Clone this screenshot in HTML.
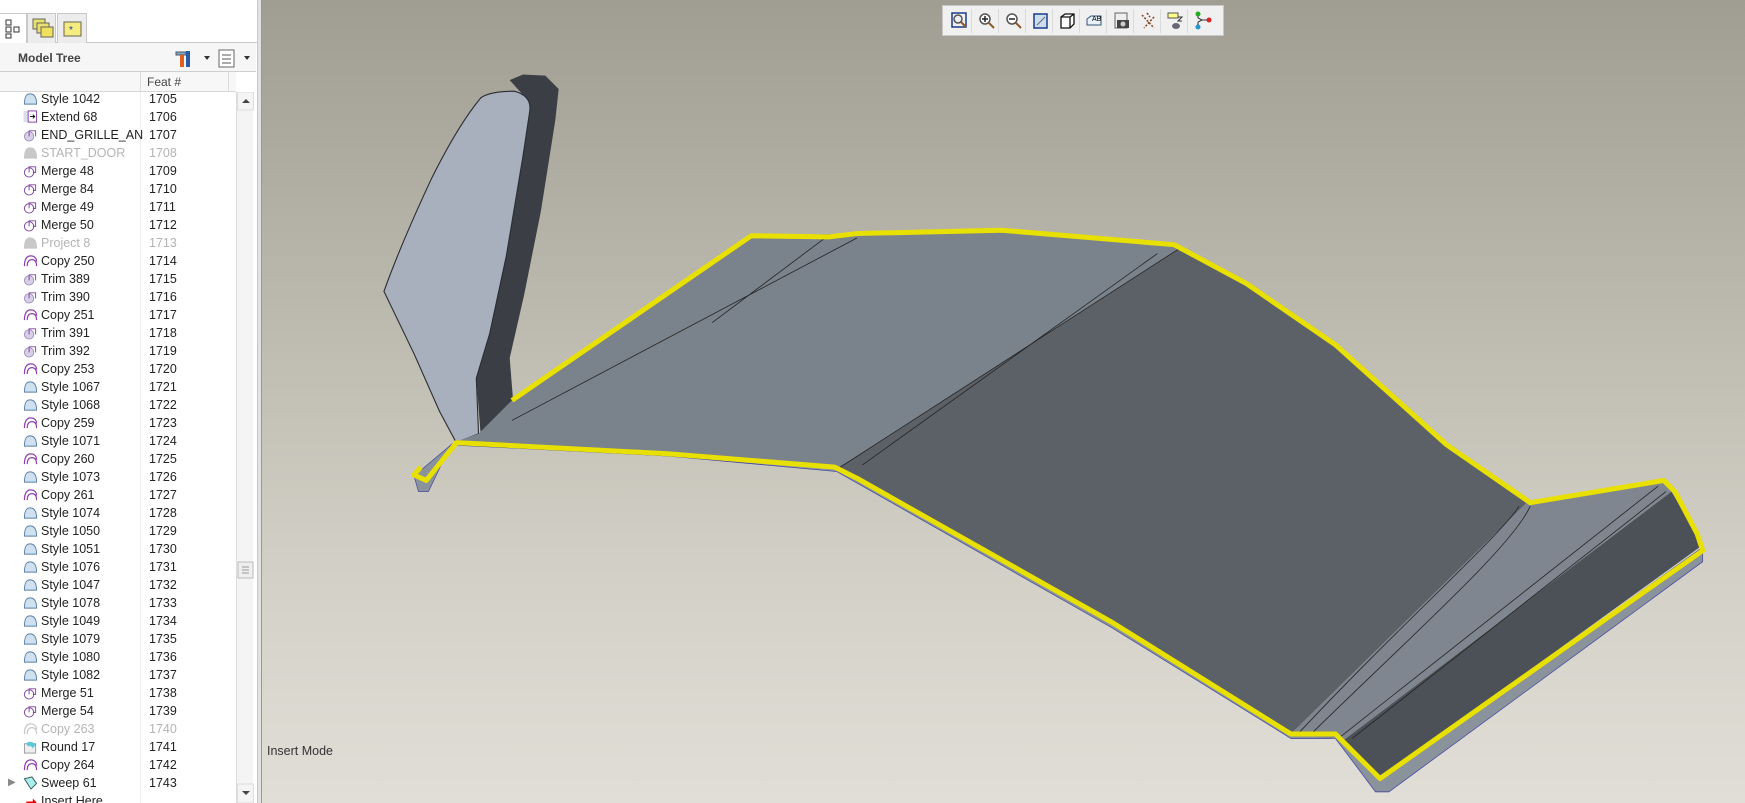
<!DOCTYPE html>
<html><head><meta charset="utf-8"><style>
*{margin:0;padding:0;box-sizing:border-box}
html{overflow:hidden;width:1745px;height:803px}
body{width:1745px;height:803px;overflow:hidden;position:relative;font-family:"Liberation Sans",sans-serif;background:linear-gradient(#a09e92,#b9b7ab 35%,#d2d0c6 70%,#e0ded6)}
#panel{position:absolute;left:0;top:0;width:258px;height:803px;background:#fff;border-right:1px solid #c8c8c8;overflow:hidden}
#split{position:absolute;left:258px;top:0;width:4px;height:803px;background:#e2e2e2;border-right:1px solid #999}
.tabs{position:absolute;left:0;top:0;width:258px;height:43px;background:#fff;border-bottom:1px solid #c9c9c9}
.tab{position:absolute;top:13px;height:30px;border:1px solid #c9c9c9;border-bottom:none;background:#ececec}
.hdr{position:absolute;left:0;top:43px;width:256px;height:29px;background:#f6f6f6;border-bottom:1px solid #cfcfcf;font-size:12px;font-weight:bold;color:#444}
.col{position:absolute;left:0;top:72px;width:236px;height:20px;background:#f7f7f7;border-bottom:1px solid #d6d6d6;font-size:12px;color:#444}
.row{position:absolute;left:0;height:18px;width:236px;font-size:12.5px;color:#222;line-height:18px;white-space:nowrap}
.row .n{position:absolute;left:41px}
.row .f{position:absolute;left:149px}
.row.g{color:#b4b4b4}
.ic{position:absolute;left:23px;top:2px;width:15px;height:14px}
.sb{position:absolute;left:236px;top:92px;width:17px;height:711px;background:#f4f4f4;border-left:1px solid #ddd}
#tb{position:absolute;left:942px;top:5px;width:282px;height:31px;background:#f0f0f0;border:1px solid #c8c8c8}
#tb div{position:absolute;top:3px;width:25px;height:24px;border-right:1px solid #dadada}
</style></head><body>
<svg style="position:absolute;left:0;top:0" width="1745" height="803" viewBox="0 0 1568 722" preserveAspectRatio="none">
<!-- fin -->
<path d="M476,92 L458,72 L470,67 L490,68 L502,80 L499,108 L486,190 L471,265 L458,322 L462,372 L432,392 L428,340 L440,300 L455,230 L470,140 Z" fill="#3b3f45"/>
<path d="M345,262 Q360,220 388,160 Q412,112 432,88 Q440,82 462,82 Q478,86 476,100 L470,140 L455,230 L440,300 L428,340 L430,390 L410,398 L395,370 L372,318 Z" fill="#a7b0bc" stroke="#2a2d33" stroke-width="1"/>
<!-- underside lip -->
<path d="M405,400 L600,410 L752,424 L1000,565 L1160,664 L1200,664 L1236,712 L1248,712 L1530,505 L1530,492 L1240,700 L1200,660 L1160,660 L1000,560 L760,420 L600,405 L410,396 L372,428 L376,442 L385,442 Z" fill="#8a929c" stroke="#3b3fa0" stroke-width="0.6"/>
<!-- main left face -->
<path d="M430,390 L460,360 L675,212 L770,210 L900,207 L1062,222 L755,420 L600,406 L410,397 Z" fill="#7a828c"/>
<!-- dark right face -->
<path d="M1062,222 L1120,255 L1200,310 L1300,400 L1372,452 L1160,660 L1000,560 L755,420 Z" fill="#5c6168"/>
<!-- flange top -->
<path d="M1372,452 L1495,432 L1502,442 L1208,665 L1160,660 Z" fill="#7f8690"/>
<!-- side face -->
<path d="M1502,442 L1530,490 L1240,700 L1208,665 Z" fill="#4c5057"/>
<g stroke="#222" stroke-width="0.7" fill="none">
<path d="M1062,222 L755,420"/><path d="M1040,228 L775,418"/>
<path d="M770,214 L460,378"/><path d="M740,215 L640,290"/>
<path d="M1365,455 C1350,480 1260,560 1168,658"/><path d="M1375,455 C1360,490 1270,570 1178,660"/>
<path d="M1490,437 L1205,662"/><path d="M1497,442 L1215,664"/>
</g>
<!-- yellow edge -->
<path d="M460,360 L675,212 L745,213 L770,210 L900,207 L1055,220 L1120,255 L1200,310 L1300,400 L1375,452 L1495,432 L1505,442 L1525,480 L1530,495 L1240,700 L1200,660 L1160,660 L1000,560 L770,430 L750,420 L600,408 L410,398 L383,432 L372,427 L378,420" fill="none" stroke="#e8e000" stroke-width="4.5" stroke-linejoin="round"/>
</svg>

<div id="tb">
<div style="left:4px"><svg width="25" height="24"><rect x="5" y="4" width="14" height="14" fill="none" stroke="#1a3a8a" stroke-width="1.5"/><circle cx="11" cy="10" r="4" fill="none" stroke="#555" stroke-width="1.5"/><path d="M14,13 L19,18" stroke="#8a5a2a" stroke-width="2"/></svg></div>
<div style="left:31px"><svg width="25" height="24"><circle cx="11" cy="10" r="5" fill="#fff" stroke="#555" stroke-width="1.5"/><path d="M8,10h6M11,7v6" stroke="#222" stroke-width="1.5"/><path d="M15,14 L20,19" stroke="#8a5a2a" stroke-width="2"/></svg></div>
<div style="left:58px"><svg width="25" height="24"><circle cx="11" cy="10" r="5" fill="#fff" stroke="#555" stroke-width="1.5"/><path d="M8,10h6" stroke="#222" stroke-width="1.5"/><path d="M15,14 L20,19" stroke="#8a5a2a" stroke-width="2"/></svg></div>
<div style="left:85px"><svg width="25" height="24"><rect x="6" y="5" width="13" height="14" fill="#cde" stroke="#1a3a8a" stroke-width="1.5"/><path d="M9,16 L17,8" stroke="#666"/></svg></div>
<div style="left:112px"><svg width="25" height="24"><path d="M6,8 L10,5 L19,5 L19,15 L15,19 L6,19Z M6,8 L15,8 L15,19 M15,8 L19,5" fill="#fff" stroke="#111" stroke-width="1.3"/></svg></div>
<div style="left:139px"><svg width="25" height="24"><path d="M5,10 L9,7 L19,7 L19,16 L5,16Z" fill="#e8f0f8" stroke="#357" /><text x="10" y="12" font-size="7" font-family="Liberation Sans">AB</text></svg></div>
<div style="left:166px"><svg width="25" height="24"><rect x="6" y="4" width="12" height="15" fill="#eee" stroke="#666"/><rect x="8" y="11" width="12" height="8" fill="#444"/><circle cx="14" cy="15" r="2.5" fill="#ccc"/></svg></div>
<div style="left:193px"><svg width="25" height="24"><path d="M6,6 L18,19 M18,8 L8,19 M11,4 L14,8" stroke="#8a4a2a" stroke-width="1.6" stroke-dasharray="2 1.5"/></svg></div>
<div style="left:220px"><svg width="25" height="24"><rect x="5" y="4" width="10" height="5" fill="#ff8" stroke="#555"/><path d="M15,8 l4,0 l-4,4 l4,0" stroke="#333" fill="none"/><ellipse cx="13" cy="17" rx="4" ry="3" fill="#667"/></svg></div>
<div style="left:247px;border:none"><svg width="25" height="24"><circle cx="8" cy="5" r="2.5" fill="#2a2"/><circle cx="8" cy="18" r="2.5" fill="#29c"/><circle cx="19" cy="11" r="2.5" fill="#d22"/><path d="M8,7 L8,9 L12,11 L17,11 M12,11 L8,13 L8,16" stroke="#333" fill="none"/></svg></div>
</div>

<div style="position:absolute;left:267px;top:744px;font-size:12.5px;color:#333">Insert Mode</div>

<div id="panel">
<div class="tabs">
<div class="tab" style="left:0;width:27px;background:#fff;border-left:none"><svg width="26" height="28"><rect x="6" y="6" width="5" height="5" fill="none" stroke="#333"/><rect x="6" y="13" width="5" height="5" fill="none" stroke="#333"/><rect x="14" y="13" width="5" height="5" fill="none" stroke="#333"/><rect x="6" y="20" width="5" height="4" fill="none" stroke="#333"/></svg></div>
<div class="tab" style="left:27px;width:29px"><svg width="28" height="28"><rect x="5" y="5" width="12" height="10" fill="#e8e070" stroke="#665"/><rect x="9" y="9" width="12" height="10" fill="#e8e070" stroke="#665"/><rect x="13" y="13" width="12" height="10" fill="#f0e060" stroke="#665"/></svg></div>
<div class="tab" style="left:57px;width:30px"><svg width="28" height="28"><rect x="6" y="8" width="17" height="14" fill="#f5ec80" stroke="#665"/><text x="11" y="19" font-size="10" fill="#23a">*</text></svg></div>
</div>
<div class="hdr"><span style="position:absolute;left:18px;top:8px">Model Tree</span>
<svg style="position:absolute;left:174px;top:4px" width="80" height="22"><path d="M2,5 h10 v3 h-10z" fill="#8ab" stroke="#456"/><rect x="6" y="8" width="4" height="12" fill="#e06020"/><rect x="12" y="4" width="4" height="16" fill="#2a5aa8"/><path d="M30,9 l3,4 l3,-4z" fill="#333"/><rect x="45" y="3" width="15" height="17" fill="#fff" stroke="#666"/><path d="M48,8h9M48,12h9M48,16h9" stroke="#555"/><path d="M70,9 l3,4 l3,-4z" fill="#333"/></svg></div>
<div class="col"><span style="position:absolute;left:147px;top:3px">Feat #</span><span style="position:absolute;left:140px;top:0;height:20px;border-left:1px solid #ddd"></span><span style="position:absolute;left:228px;top:0;height:20px;border-left:1px solid #ddd"></span></div>
<div style="position:absolute;left:140px;top:92px;height:711px;border-left:1px solid #eee"></div>
<div id="rows"></div>
<div class="sb"><svg width="17" height="711"><path d="M5,11 l4,-4 l4,4z" fill="#444"/><rect x="0.5" y="0" width="16" height="18" fill="none" stroke="#ddd"/><rect x="1" y="470" width="15" height="16" fill="#eee" stroke="#bbb"/><path d="M5,475h7M5,478h7M5,481h7" stroke="#999"/><rect x="0.5" y="692" width="16" height="19" fill="none" stroke="#ddd"/><path d="M5,699 l4,4 l4,-4z" fill="#444"/></svg></div>
</div>
<div id="split"></div>
<script>
var d=[["Style 1042",1705,"s"],["Extend 68",1706,"e"],["END_GRILLE_AN",1707,"t"],["START_DOOR",1708,"s",1],["Merge 48",1709,"m"],["Merge 84",1710,"m"],["Merge 49",1711,"m"],["Merge 50",1712,"m"],["Project 8",1713,"s",1],["Copy 250",1714,"c"],["Trim 389",1715,"t"],["Trim 390",1716,"t"],["Copy 251",1717,"c"],["Trim 391",1718,"t"],["Trim 392",1719,"t"],["Copy 253",1720,"c"],["Style 1067",1721,"s"],["Style 1068",1722,"s"],["Copy 259",1723,"c"],["Style 1071",1724,"s"],["Copy 260",1725,"c"],["Style 1073",1726,"s"],["Copy 261",1727,"c"],["Style 1074",1728,"s"],["Style 1050",1729,"s"],["Style 1051",1730,"s"],["Style 1076",1731,"s"],["Style 1047",1732,"s"],["Style 1078",1733,"s"],["Style 1049",1734,"s"],["Style 1079",1735,"s"],["Style 1080",1736,"s"],["Style 1082",1737,"s"],["Merge 51",1738,"m"],["Merge 54",1739,"m"],["Copy 263",1740,"c",1],["Round 17",1741,"r"],["Copy 264",1742,"c"],["Sweep 61",1743,"w"],["Insert Here","","i"]];
var ic={s:'<path d="M1,13 C1,5 3,2 7,2 C11,2 14,5 14,13 Z" fill="#cfe0f0" stroke="#5a7fa8"/>',
e:'<rect x="0" y="1" width="6" height="12" fill="#dde"/><rect x="5" y="1" width="9" height="12" fill="#fff" stroke="#8040a0"/><path d="M7,7h5M10,5l2,2l-2,2" stroke="#000" fill="none"/>',
t:'<circle cx="6" cy="9" r="5" fill="#d8d0e8" stroke="#a090c0"/><path d="M6,9 L6,3 L13,3 L13,9" fill="none" stroke="#8040a0"/>',
m:'<circle cx="6" cy="9" r="5" fill="none" stroke="#8040a0"/><path d="M6,9 L6,3 L13,3 L13,9 L10,9" fill="none" stroke="#8040a0"/>',
c:'<path d="M1,13 C1,5 4,2 8,2 C11,2 14,4 14,8 M4,13 C4,8 6,6 9,6 C12,6 14,8 14,13" fill="none" stroke="#9040b0" stroke-width="1.3"/>',
r:'<rect x="1" y="4" width="12" height="10" fill="#eee" stroke="#999"/><path d="M3,4 C4,1 10,1 13,5 L10,9 C8,6 6,6 5,7Z" fill="#5cc8d8"/>',
w:'<path d="M1,3 L9,1 L14,8 L8,14 Z" fill="#aee" stroke="#355"/>',
i:'<path d="M3,8 h7 v-3 l4,4 l-4,4 v-3 h-7z" fill="#e00"/>'};
var h="";d.forEach(function(r,i){var y=90+18*i;var svg=ic[r[2]];if(r[3])svg=svg.replace(/#[0-9a-f]{3,6}/g,"#c8c8c8");
h+='<div class="row'+(r[3]?' g':'')+'" style="top:'+y+'px">'+(r[2]=="w"?'<span style="position:absolute;left:8px;color:#888;font-size:10px">&#9654;</span>':'')+'<svg class="ic" viewBox="0 0 15 15">'+svg+'</svg><span class="n">'+r[0]+'</span><span class="f">'+r[1]+'</span></div>';});
document.getElementById("rows").innerHTML=h;
</script>
</body></html>
